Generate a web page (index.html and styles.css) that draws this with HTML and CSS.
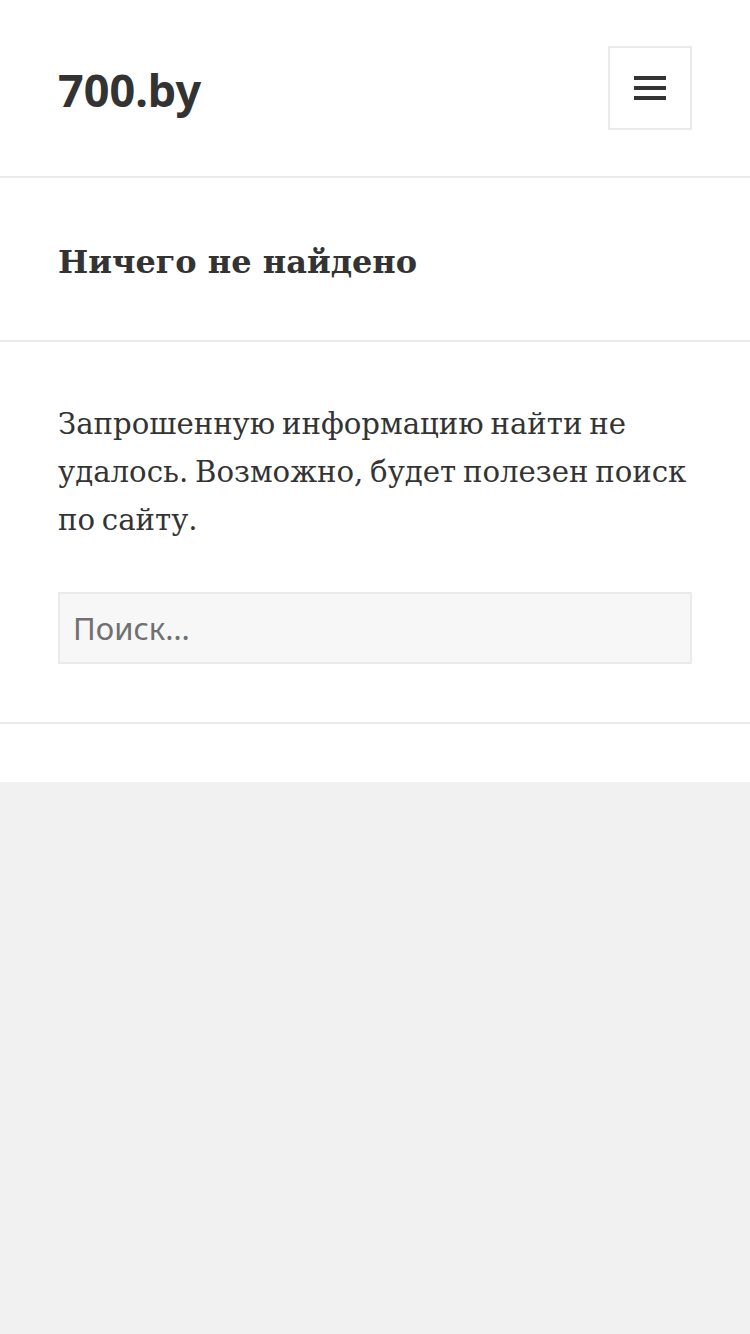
FILE: index.html
```html
<!DOCTYPE html>
<html lang="ru">
<head>
    <meta charset="UTF-8">
    <meta name="viewport" content="width=device-width, initial-scale=1.0">
    <title>Ничего не найдено – 700.by</title>
    <link rel="stylesheet" href="styles.css">
</head>
<body>
    <div class="site">
        <header class="site-header">
            <a class="site-title" href="#">700.by</a>
            <button class="secondary-toggle" aria-label="Меню">
                <svg width="32" height="24" viewBox="0 0 32 24">
                    <rect x="0" y="0" width="32" height="4" fill="#333"/>
                    <rect x="0" y="10" width="32" height="4" fill="#333"/>
                    <rect x="0" y="20" width="32" height="4" fill="#333"/>
                </svg>
            </button>
        </header>

        <section class="no-results">
            <div class="page-header">
                <h1 class="page-title">Ничего не найдено</h1>
            </div>

            <div class="page-content">
                <p>Запрошенную информацию найти не удалось. Возможно, будет полезен поиск по&nbsp;сайту.</p>
                <form class="search-form" onsubmit="return false;">
                    <input type="search" class="search-field" placeholder="Поиск…">
                </form>
            </div>
        </section>
    </div>
</body>
</html>
```

FILE: styles.css
```css
body {
    margin: 0;
    padding: 0;
    background-color: #f1f1f1;
    color: #333;
    font-family: "DejaVu Serif", "Liberation Serif", serif;
}
.site {
    background: #fff;
    padding-bottom: 58px;
}
.site-header {
    display: flex;
    align-items: center;
    justify-content: space-between;
    height: 176px;
    padding: 0 58px;
    border-bottom: 2px solid #eaeaea;
}
.site-title {
    font-family: "Noto Sans", "Open Sans", sans-serif;
    font-weight: 700;
    font-size: 45px;
    line-height: 60px;
    color: #333;
    text-decoration: none;
    margin-top: 4px;
}
.secondary-toggle {
    display: flex;
    align-items: center;
    justify-content: center;
    box-sizing: border-box;
    width: 84px;
    height: 84px;
    padding: 0;
    background: #fff;
    border: 2px solid #eaeaea;
    cursor: pointer;
}
.page-header {
    padding: 61px 58px 55px;
    border-bottom: 2px solid #eaeaea;
}
.page-title {
    margin: 0;
    font-size: 32px;
    line-height: 46px;
    font-weight: 700;
}
.page-content {
    padding: 58px;
    border-bottom: 2px solid #eaeaea;
}
.page-content p {
    margin: 0 0 48px;
    font-size: 29.2px;
    line-height: 48px;
    word-spacing: -2.5px;
}
.search-form {
    margin: 0;
}
.search-field {
    display: block;
    box-sizing: border-box;
    width: 100%;
    height: 72px;
    margin: 0;
    padding: 0 13px;
    background: #f7f7f7;
    border: 2px solid #eaeaea;
    border-radius: 0;
    font-family: "Noto Sans", "Open Sans", sans-serif;
    font-size: 31px;
    color: #333;
    outline: none;
    -webkit-appearance: none;
}
.search-field::placeholder {
    color: #707070;
}
```
